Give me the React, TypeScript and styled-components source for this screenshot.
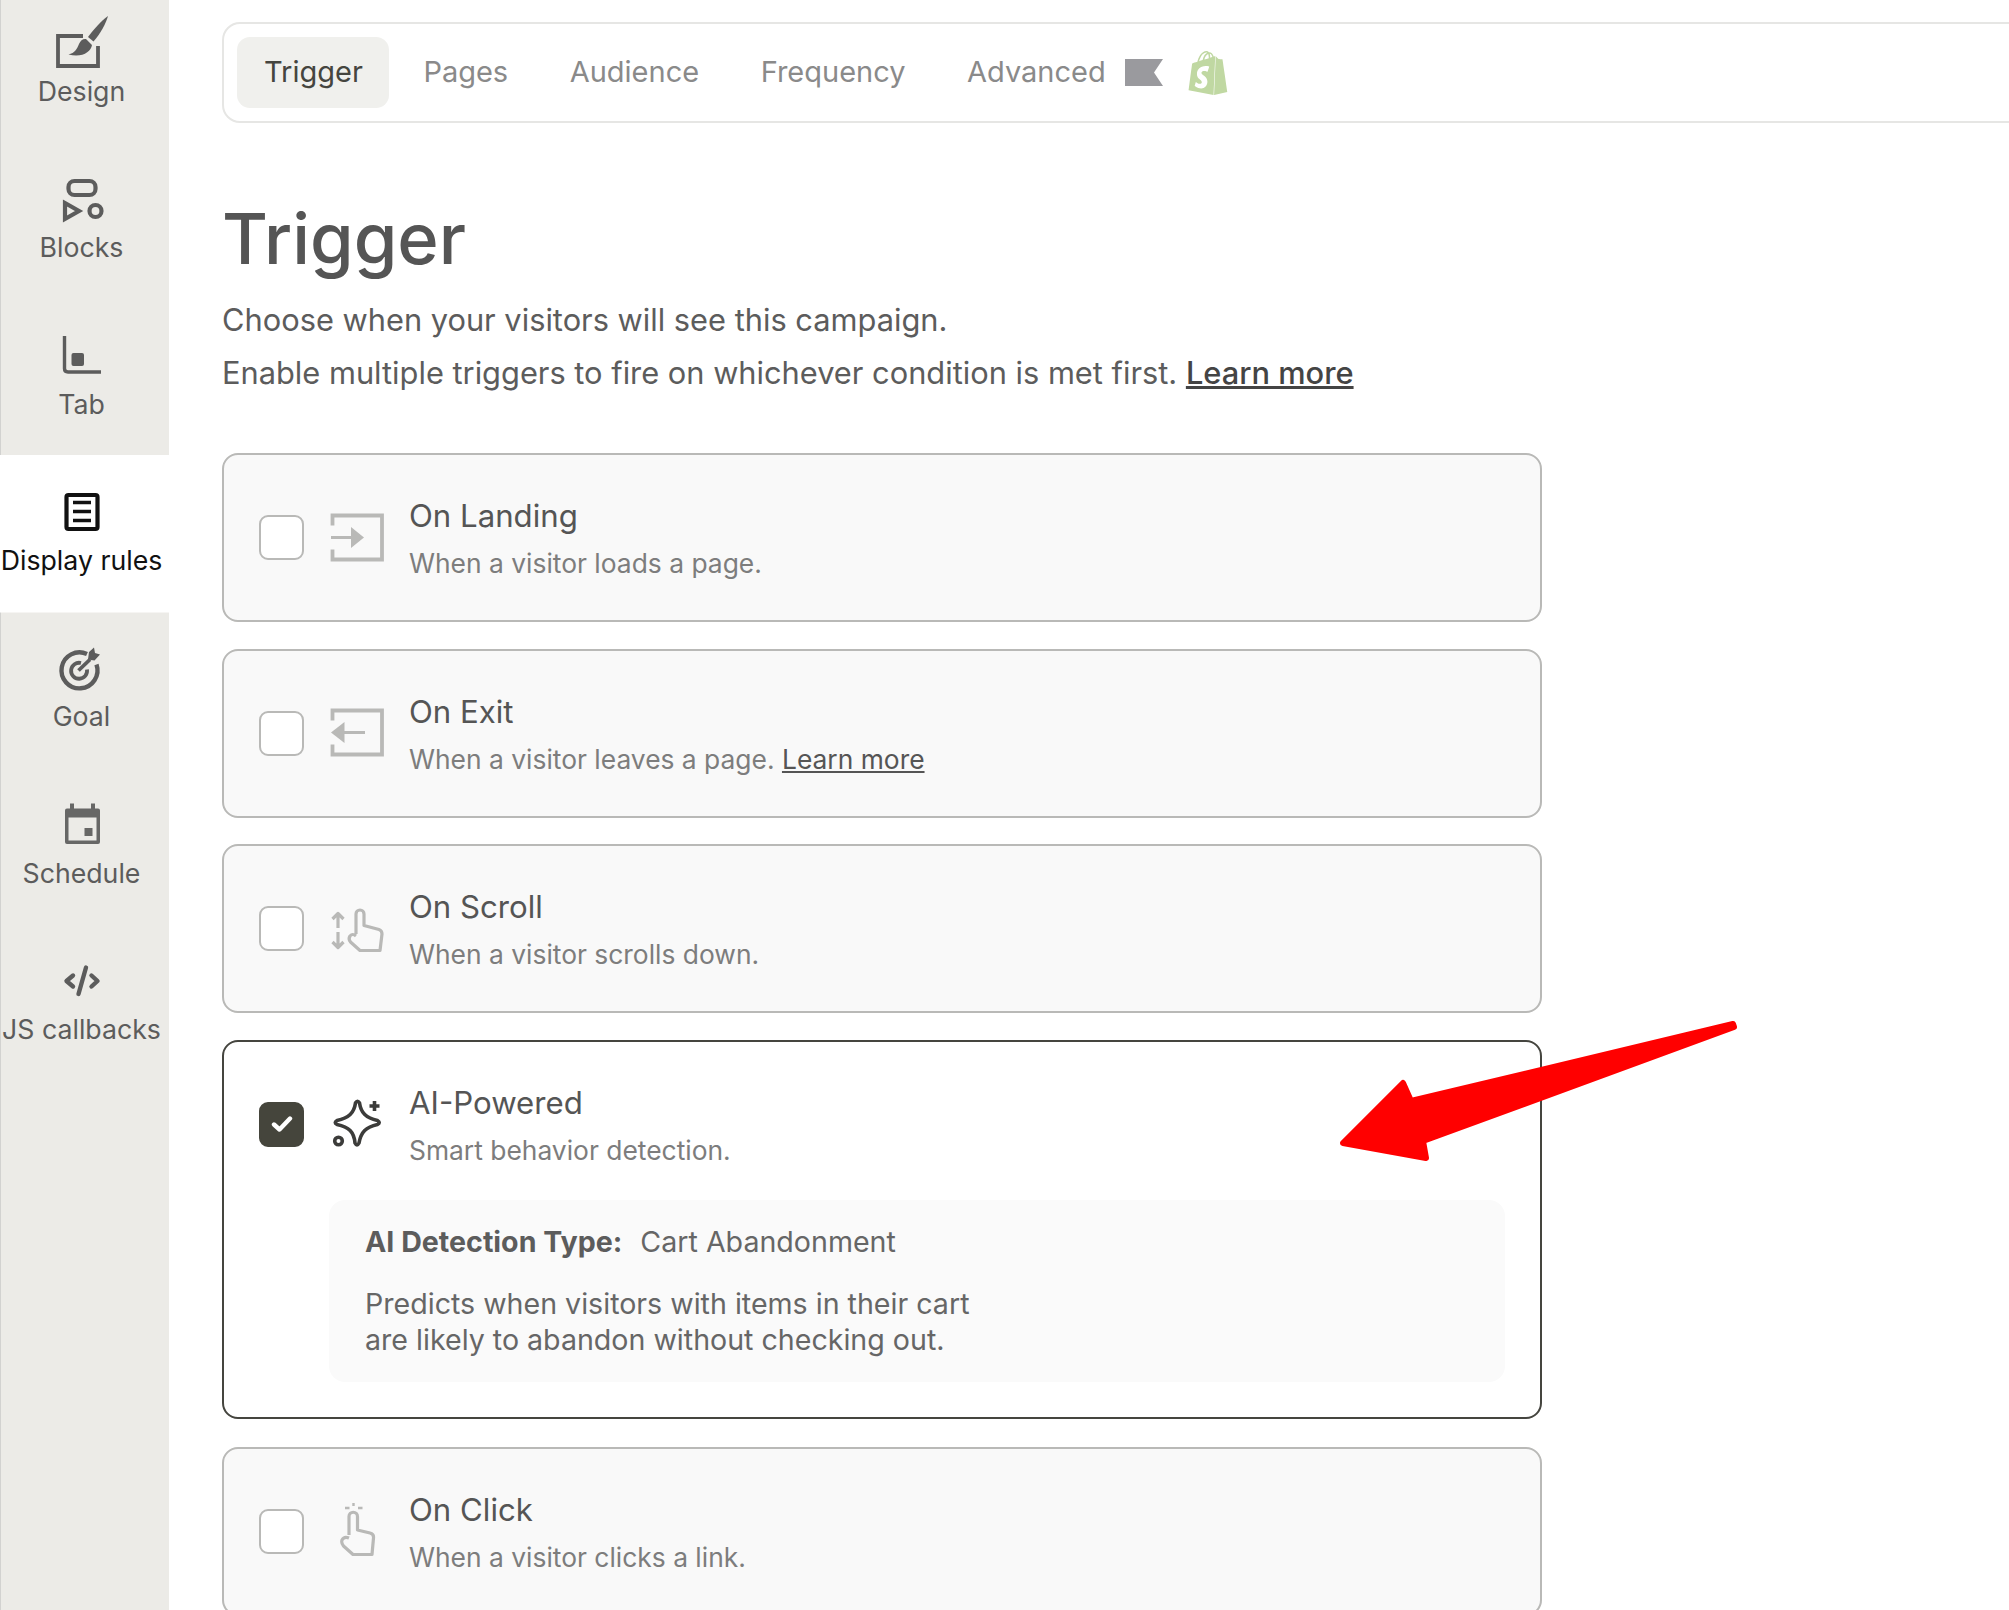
import React from 'react';
import styled, { createGlobalStyle } from 'styled-components';
import { SiShopify } from 'react-icons/si';

const GlobalStyle = createGlobalStyle`
  html, body {
    margin: 0;
    padding: 0;
    background: #fff;
    overflow: hidden;
  }
  body {
    font-family: Inter, "Noto Sans", "Liberation Sans", sans-serif;
    color: #555;
  }
  * {
    box-sizing: border-box;
  }
`;

const Page = styled.div`
  position: relative;
  display: flex;
  width: 2009px;
  height: 1610px;
  overflow: hidden;
`;

const Sidebar = styled.nav`
  flex: 0 0 169px;
  margin-top: -14px;
  height: 1624px;
  background: #ecebe7;
  border-left: 1px solid #d2d2d0;
`;

const SideItem = styled.div<{ $active?: boolean }>`
  height: 156.33px;
  margin-left: -1px;
  padding-top: 26px;
  display: flex;
  flex-direction: column;
  align-items: center;
  background: ${p => (p.$active ? '#fff' : 'transparent')};
  box-shadow: ${p => (p.$active ? '0 1.5px 0 #fff' : 'none')};
  color: ${p => (p.$active ? '#111' : '#5c5c5c')};
  svg {
    display: block;
    width: 60px;
    height: 60px;
    flex: none;
  }
`;

const SideLabel = styled.div`
  margin: -1px 6px 0 0;
  font-size: 26.7px;
  line-height: 40px;
  white-space: nowrap;
`;

const Main = styled.main`
  flex: 1;
  min-width: 0;
  padding: 22px 0 0 53px;
`;

const TabBar = styled.div`
  display: flex;
  align-items: center;
  width: 1900px;
  height: 101px;
  padding: 0 13px;
  border: 2px solid #e6e6e4;
  border-radius: 18px;
`;

const Tab = styled.div<{ $active?: boolean }>`
  height: 71px;
  padding: 0 ${p => (p.$active ? '26px' : '27px')} 2px 27px;
  margin-right: 7.5px;
  display: flex;
  align-items: center;
  border-radius: 13px;
  font-size: 29px;
  color: ${p => (p.$active ? '#45453f' : '#8a8a8a')};
  background: ${p => (p.$active ? '#f0f0ed' : 'transparent')};
`;

const Flag = styled.svg`
  width: 38px;
  height: 27px;
  margin-left: -15px;
  flex: none;
`;

const ShopifyBag = styled(SiShopify)`
  width: 44px;
  height: 44px;
  margin-left: 23px;
  color: #c0d8a2;
  flex: none;
`;

const Heading = styled.h1`
  margin: 71px 0 0;
  font-size: 70.5px;
  line-height: 90px;
  font-weight: 500;
  color: #555;
`;

const Intro = styled.p`
  margin: 10px 0 0;
  font-size: 30.8px;
  line-height: 52.5px;
  color: #5c5c5c;
`;

const IntroLink = styled.a`
  color: #444;
  font-weight: 500;
  text-decoration: underline;
`;

const CardList = styled.div`
  display: flex;
  flex-direction: column;
  gap: 26.5px;
  width: 1320px;
  margin-top: 54px;
`;

const Card = styled.div<{ $selected?: boolean }>`
  min-height: 169px;
  padding: 41px 35px ${p => (p.$selected ? '35px' : '37px')};
  margin-bottom: ${p => (p.$selected ? '1.5px' : '0')};
  border: 2px solid ${p => (p.$selected ? '#45453f' : '#b9b9b7')};
  border-radius: 16px;
  background: ${p => (p.$selected ? '#fff' : '#f9f9f9')};
  flex: none;
`;

const CardRow = styled.div`
  display: flex;
  align-items: flex-start;
  gap: 24.5px;
`;

const CheckBox = styled.div<{ $checked?: boolean }>`
  flex: none;
  width: 45px;
  height: 45px;
  margin-top: 19px;
  display: flex;
  align-items: center;
  justify-content: center;
  border: 2px solid ${p => (p.$checked ? '#45453c' : '#b9b9b7')};
  border-radius: 9px;
  background: ${p => (p.$checked ? '#45453c' : '#fff')};
  svg {
    width: 22px;
    height: 18px;
  }
`;

const CardIcon = styled.div<{ $selected?: boolean }>`
  flex: none;
  width: 56px;
  height: 56px;
  margin-top: 13.5px;
  color: ${p => (p.$selected ? '#3c3c3a' : '#b9b9b7')};
  svg {
    display: block;
    width: 56px;
    height: 56px;
    overflow: visible;
  }
`;

const CardTitle = styled.div`
  font-size: 31.2px;
  line-height: 40px;
  color: #555;
`;

const CardDesc = styled.div`
  margin-top: 7px;
  font-size: 26.4px;
  line-height: 40px;
  color: #7d7d7d;
`;

const CardLink = styled.a`
  color: #555;
  text-decoration: underline;
`;

const Panel = styled.div`
  margin: 30px 0 0 70px;
  height: 182px;
  padding: 22px 36px;
  border-radius: 16px;
  background: #fafafa;
  font-size: 28.6px;
  color: #666;
`;

const PanelType = styled.div`
  line-height: 40px;
`;

const PanelStrong = styled.strong`
  font-weight: 700;
  color: #5c5c5c;
  margin-right: 18px;
`;

const PanelText = styled.div`
  margin-top: 24px;
  line-height: 36px;
`;

const Arrow = styled.svg`
  position: absolute;
  left: 1330px;
  top: 1010px;
  width: 420px;
  height: 160px;
`;

const DesignIcon = () => (
  <svg viewBox="0 0 60 60" fill="none">
    <path d="M28 24H3V54H43V34" stroke="currentColor" strokeWidth="3.8" />
    <path d="M53 4C51 11 46 21 38.5 29.5L33 25C39 17 46 9 53 4Z" fill="currentColor" />
    <path d="M31 27L37 33C36 40 27 46 13.5 42.5C20 41 22 37 24 32C25.5 28.5 28 26.5 31 27Z" fill="currentColor" />
  </svg>
);

const BlocksIcon = () => (
  <svg viewBox="0 0 60 60" fill="none" stroke="currentColor" strokeWidth="4.2">
    <rect x="13.5" y="13" width="27" height="14" rx="6" />
    <path d="M10 35L24 43L10 51Z" />
    <circle cx="40.5" cy="43" r="6" />
  </svg>
);

const TabIcon = () => (
  <svg viewBox="0 0 60 60" fill="none">
    <path d="M9.5 11V43.5Q9.5 47 13 47H46" stroke="currentColor" strokeWidth="3.4" />
    <rect x="16.5" y="28" width="12.5" height="13" rx="2" fill="currentColor" />
  </svg>
);

const RulesIcon = () => (
  <svg viewBox="0 0 60 60" fill="none" stroke="currentColor">
    <rect x="11.5" y="14" width="31" height="34" rx="2" strokeWidth="4.2" />
    <path d="M18 21.5H36M18 30.5H36M18 39.5H36" strokeWidth="3.6" />
  </svg>
);

const GoalIcon = () => (
  <svg viewBox="0 0 60 60" fill="none">
    <g transform="translate(-1 2.5)">
      <path d="M33 14.5A18 18 0 1 0 42.5 25" stroke="currentColor" strokeWidth="4.4" />
      <path d="M27 23.5A8 8 0 1 0 33 30" stroke="currentColor" strokeWidth="3.8" />
      <path d="M24.5 31L36 20" stroke="currentColor" strokeWidth="3.8" />
      <path d="M34 20L35 12.5L40 8L41 13.5L46 15L40.5 21L34 20Z" fill="currentColor" />
    </g>
  </svg>
);

const ScheduleIcon = () => (
  <svg viewBox="0 0 60 60" fill="none" opacity="0.92">
    <path d="M15 9.5H19V14.5H36V9.5H40V14.5H43Q45 14.5 45 16.5V48Q45 50 43 50H12Q10 50 10 48V16.5Q10 14.5 12 14.5H15Z" fill="currentColor" />
    <rect x="13.5" y="23.5" width="28" height="23" fill="#ecebe7" />
    <rect x="29.5" y="34" width="8" height="8" fill="currentColor" />
  </svg>
);

const CodeIcon = () => (
  <svg viewBox="0 0 60 60" fill="none" stroke="currentColor" strokeWidth="4.4" strokeLinecap="round" strokeLinejoin="round">
    <path d="M18 25.5L11.5 31L18 36.5" />
    <path d="M31 17.5L23.5 44" />
    <path d="M36.5 25.5L42.5 31L36.5 36.5" />
  </svg>
);

const LandingIcon = () => (
  <svg viewBox="0 -2 56 56" fill="none">
    <path d="M3.5 13.5V3.5H53V47.5H3.5V37.5" stroke="currentColor" strokeWidth="3.8" />
    <path d="M2 25.5H24" stroke="currentColor" strokeWidth="3" />
    <path d="M22 15L35 25.5L22 36Z" fill="currentColor" />
  </svg>
);

const ExitIcon = () => (
  <svg viewBox="0 -2 56 56" fill="none">
    <path d="M3.5 13.5V3.5H53V47.5H3.5V37.5" stroke="currentColor" strokeWidth="3.8" />
    <path d="M14 25.5H36" stroke="currentColor" strokeWidth="3" />
    <path d="M15.5 15L2 25.5L15.5 36Z" fill="currentColor" />
  </svg>
);

const ScrollIcon = () => (
  <svg viewBox="0 -2 56 56" fill="none" stroke="currentColor" strokeLinejoin="round">
    <path d="M9 25V11M3.5 16L9 10.5L14.5 16" strokeWidth="3.2" />
    <path d="M9 29V44M3.5 39L9 44.5L14.5 39" strokeWidth="3.2" />
    <path d="M27 31V11A4 4 0 0 1 35 11V22.5L50 26.5Q53 27.5 53 31L51 47.5H31L21.5 39Q19 36 21 33Q23.5 30 27 33" strokeWidth="3.2" />
  </svg>
);

const ClickIcon = () => (
  <svg viewBox="0 -2 56 56" fill="none" stroke="currentColor" strokeLinejoin="round">
    <path d="M24.5 -2V1M16 3H20.5M29 3H33.5" strokeWidth="2.4" />
    <path d="M20 30V11.5A4 4 0 0 1 28.5 11.5V25L41 28Q45 29 44.5 33L43 49.5H24L14.5 41Q12 38 13 35Q15 31 20 33" strokeWidth="3.2" />
  </svg>
);

const SparkIcon = () => (
  <svg viewBox="0 -2 56 56" fill="none" stroke="currentColor" strokeWidth="3.6" strokeLinejoin="round">
    <path d="M26.5 5Q28.5 1.5 30.5 5C32 15 37 20 48.5 22.5Q52 24.5 48.5 26.5C37 29 32 34 30 45Q28 49 26 45C25 34 20 29 8 26.5Q4.5 24.5 8 22.5C20 20 25 15 26.5 5Z" />
    <path d="M45.5 3V13M40.5 8H50.5" />
    <circle cx="9.5" cy="43" r="3.8" />
  </svg>
);

const CheckMark = () => (
  <svg viewBox="0 0 22 18" fill="none">
    <path d="M3 9.5L8.5 14.5L19 3.5" stroke="#fff" strokeWidth="4.4" strokeLinecap="round" strokeLinejoin="round" />
  </svg>
);

const sideItems = [
  { label: 'Design', Icon: DesignIcon },
  { label: 'Blocks', Icon: BlocksIcon },
  { label: 'Tab', Icon: TabIcon },
  { label: 'Display rules', Icon: RulesIcon, active: true },
  { label: 'Goal', Icon: GoalIcon },
  { label: 'Schedule', Icon: ScheduleIcon },
  { label: 'JS callbacks', Icon: CodeIcon },
];

const tabs = ['Trigger', 'Pages', 'Audience', 'Frequency', 'Advanced'];

const App = () => {
  return (
    <Page>
      <GlobalStyle />
      <Sidebar>
        {sideItems.map(({ label, Icon, active }) => (
          <SideItem key={label} $active={active}>
            <Icon />
            <SideLabel>{label}</SideLabel>
          </SideItem>
        ))}
      </Sidebar>

      <Main>
        <TabBar>
          {tabs.map(tab => (
            <Tab key={tab} $active={tab === 'Trigger'}>
              {tab}
            </Tab>
          ))}
          <Flag viewBox="0 0 38 27">
            <path d="M0 0H38L29 13.5L38 27H0Z" fill="#9a9a9e" />
          </Flag>
          <ShopifyBag />
        </TabBar>

        <Heading>Trigger</Heading>
        <Intro>
          Choose when your visitors will see this campaign.
          <br />
          Enable multiple triggers to fire on whichever condition is met first.{' '}
          <IntroLink>Learn more</IntroLink>
        </Intro>

        <CardList>
          <Card>
            <CardRow>
              <CheckBox />
              <CardIcon>
                <LandingIcon />
              </CardIcon>
              <div>
                <CardTitle>On Landing</CardTitle>
                <CardDesc>When a visitor loads a page.</CardDesc>
              </div>
            </CardRow>
          </Card>

          <Card>
            <CardRow>
              <CheckBox />
              <CardIcon>
                <ExitIcon />
              </CardIcon>
              <div>
                <CardTitle>On Exit</CardTitle>
                <CardDesc>
                  When a visitor leaves a page. <CardLink>Learn more</CardLink>
                </CardDesc>
              </div>
            </CardRow>
          </Card>

          <Card>
            <CardRow>
              <CheckBox />
              <CardIcon>
                <ScrollIcon />
              </CardIcon>
              <div>
                <CardTitle>On Scroll</CardTitle>
                <CardDesc>When a visitor scrolls down.</CardDesc>
              </div>
            </CardRow>
          </Card>

          <Card $selected>
            <CardRow>
              <CheckBox $checked>
                <CheckMark />
              </CheckBox>
              <CardIcon $selected>
                <SparkIcon />
              </CardIcon>
              <div>
                <CardTitle>AI-Powered</CardTitle>
                <CardDesc>Smart behavior detection.</CardDesc>
              </div>
            </CardRow>
            <Panel>
              <PanelType>
                <PanelStrong>AI Detection Type:</PanelStrong>
                Cart Abandonment
              </PanelType>
              <PanelText>
                Predicts when visitors with items in their cart
                <br />
                are likely to abandon without checking out.
              </PanelText>
            </Panel>
          </Card>

          <Card>
            <CardRow>
              <CheckBox />
              <CardIcon>
                <ClickIcon />
              </CardIcon>
              <div>
                <CardTitle>On Click</CardTitle>
                <CardDesc>When a visitor clicks a link.</CardDesc>
              </div>
            </CardRow>
          </Card>
        </CardList>
      </Main>

      <Arrow viewBox="0 0 420 160">
        <path
          d="M13 133L73 73L81 91L403 14L404 17L93 131L96 148Z"
          fill="#ff0000"
          stroke="#ff0000"
          strokeWidth="6"
          strokeLinejoin="round"
        />
      </Arrow>
    </Page>
  );
};

export default App;
